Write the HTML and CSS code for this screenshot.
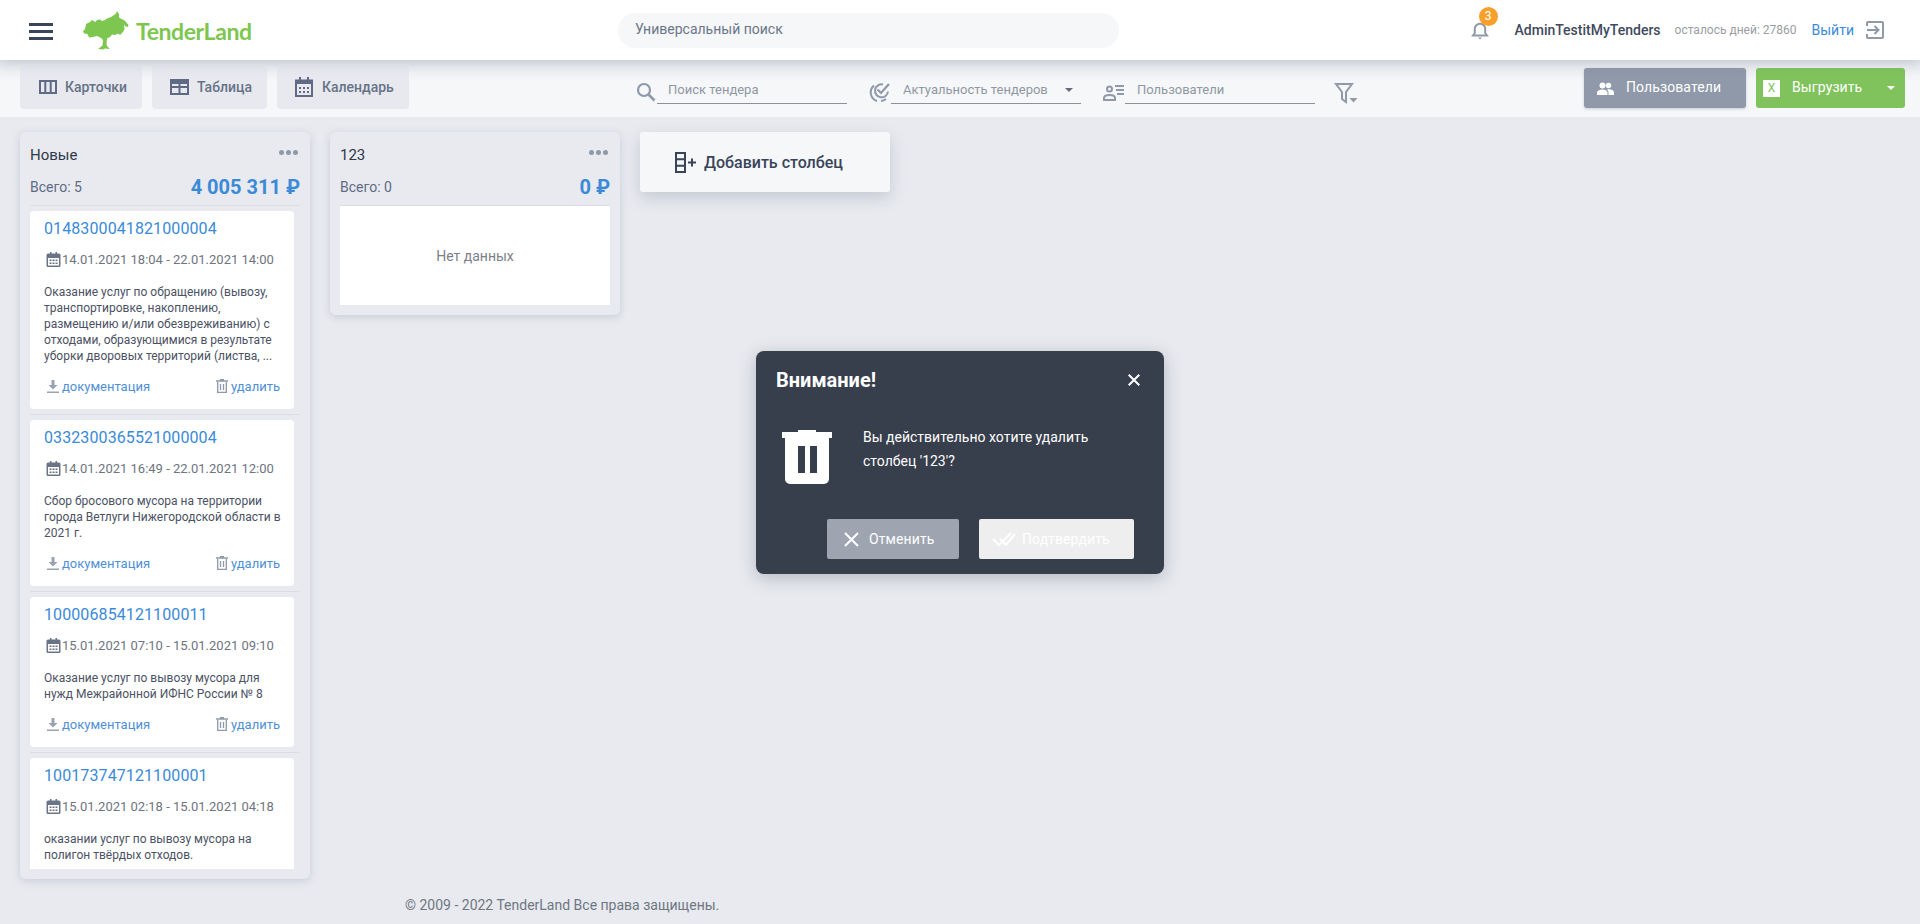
FILE: index.html
```html
<!DOCTYPE html>
<html lang="ru">
<head>
<meta charset="utf-8">
<title>TenderLand</title>
<link rel="stylesheet" href="styles.css">
</head>
<body>
<header class="header">
  <div class="burger"><span></span><span></span><span></span></div>
  <a class="logo">
    <svg class="logo-mark" width="46" height="39" viewBox="0 0 46 39"><path fill="#7dc750" d="M0 20L2 18L3 13L7 11L9 9L12.500 11L14 9L17 8.500L19 10L22 9L24 7.500L28 6L31 4L33 2.500L34 0L36 3L36 6.500L38.500 8L41 9L43 11L45.500 14L45 16L42.500 15.500L41 13.500L41.500 18L40 21L37 24L35 22.500L32 24L29 23.500L27 26L24 27.500L23.500 33L24 35L27 38L22 37.500L20 38.500L15 38L19.500 34.500L20 29L18 27L14 25L10 26L6 26.500L4.500 23L1 22.500Z"/></svg>
    <span class="logo-text">TenderLand</span>
  </a>
  <div class="global-search">Универсальный поиск</div>
  <div class="user">
    <div class="bell">
      <svg width="20" height="20" viewBox="0 0 20 20"><path fill="none" stroke="#8f99a9" stroke-width="2" d="M3 15.500h14l-1.800-2.500V9a5.200 5.200 0 0 0-10.400 0v4z"/><path fill="#8f99a9" d="M8 17.500h4L10 19.500z"/></svg>
      <span class="badge">3</span>
    </div>
    <span class="user-name">AdminTestitMyTenders</span>
    <span class="days">осталось дней: 27860</span>
    <a class="logout">Выйти</a>
    <svg width="18" height="18" viewBox="0 0 18 18"><path fill="none" stroke="#8f99a9" stroke-width="2" d="M1 5V2a1 1 0 0 1 1-1h14a1 1 0 0 1 1 1v14a1 1 0 0 1-1 1H2a1 1 0 0 1-1-1v-3M1 9h11M8.500 5l4 4-4 4"/></svg>
  </div>
</header>

<div class="toolbar">
  <div class="views">
    <a class="view view-cards">
      <svg width="18" height="14" viewBox="0 0 18 14"><path fill="none" stroke="#5f6b84" stroke-width="2" d="M1 1h16v12H1zM6.300 1v12M11.700 1v12"/></svg>
      Карточки
    </a>
    <a class="view view-table">
      <svg width="19" height="16" viewBox="0 0 19 16"><path fill="none" stroke="#5f6b84" stroke-width="2" d="M1 1h17v14H1zM1 8h17M9.500 5v10"/><path fill="#5f6b84" d="M1 1h17v4H1z"/></svg>
      Таблица
    </a>
    <a class="view view-cal">
      <svg width="18" height="20" viewBox="0 0 18 20"><path fill="none" stroke="#5f6b84" stroke-width="2" d="M1 3.500h16v15.500H1zM5 0v5M13 0v5"/><path fill="#5f6b84" d="M1 3.500h16v3.500H1zM4 10h2v2H4zM8 10h2v2H8zM12 10h2v2h-2zM4 14h2v2H4zM8 14h2v2H8zM12 14h2v2h-2z"/></svg>
      Календарь
    </a>
  </div>
  <div class="filters">
    <div class="filter">
      <svg width="21" height="20" viewBox="0 0 21 20"><circle cx="8" cy="8" r="6" fill="none" stroke="#8f99a9" stroke-width="2.200"/><path stroke="#8f99a9" stroke-width="2.600" d="M12.500 12.500l6 6"/></svg>
      <div class="field">Поиск тендера</div>
    </div>
    <div class="filter">
      <svg width="22" height="20" viewBox="0 0 22 20"><path fill="none" stroke="#8f99a9" stroke-width="2" d="M5 3.500a9 9 0 0 0 3 15.500M17 17a9 9 0 0 1-5 2"/><path fill="none" stroke="#8f99a9" stroke-width="2" d="M14 2.500a6.500 6.500 0 1 0 5 7"/><path fill="none" stroke="#8f99a9" stroke-width="2.200" d="M8.500 7.500l3.500 3.500L20 2"/></svg>
      <div class="field field-gap">Актуальность тендеров<span class="caret"></span></div>
    </div>
    <div class="filter">
      <svg width="22" height="20" viewBox="0 0 22 20"><circle cx="6.500" cy="7" r="2.500" fill="none" stroke="#8f99a9" stroke-width="2"/><path fill="none" stroke="#8f99a9" stroke-width="2" d="M1 18v-2c0-2 2.500-3 5.500-3s5.500 1 5.500 3v2z"/><path stroke="#8f99a9" stroke-width="2" d="M12 4h9M13 8h8M14 12h7"/></svg>
      <div class="field field-gap">Пользователи</div>
    </div>
    <svg class="funnel" width="25" height="24" viewBox="0 0 25 24"><path fill="none" stroke="#8f99a9" stroke-width="2" d="M2 2h16l-6 8v10l-4-3v-7z"/><path fill="#8f99a9" d="M15.500 16h8l-4 4.500z"/></svg>
  </div>
  <div class="actions">
    <a class="btn btn-users">
      <svg width="17" height="13" viewBox="0 0 17 13"><circle cx="5.500" cy="3.500" r="3" fill="#fff"/><circle cx="11.500" cy="3.500" r="2.700" fill="#fff"/><path fill="#fff" d="M0 13v-2.500C0 8.500 3 7.500 5.500 7.500s5 1 5 3V13zM11.500 13v-2.500c0-1.200-.6-2.200-1.500-3 3-.6 7 .4 7 3V13z"/></svg>
      Пользователи
    </a>
    <a class="btn btn-export">
      <span class="xls">X</span>
      Выгрузить
      <span class="caret caret-white"></span>
    </a>
  </div>
</div>

<main class="board">
  <section class="col">
    <div class="col-title"><span>Новые</span><span class="dots"><i></i><i></i><i></i></span></div>
    <div class="col-sum"><span class="total">Всего: 5</span><span class="sum">4 005 311 ₽</span></div>
    <div class="cards">
      <article class="item">
        <div class="card">
          <a class="num">0148300041821000004</a>
          <div class="date"><svg class="cal" width="15" height="15" viewBox="0 0 15 15"><path fill="#6a7487" d="M2 1.500h2V0h1.500v1.500h4V0H11v1.500h2a1.500 1.500 0 0 1 1.500 1.500v10.500A1.500 1.500 0 0 1 13 15H2a1.500 1.500 0 0 1-1.500-1.500V3A1.500 1.500 0 0 1 2 1.500zM2 6v7.500h11V6zM3.500 7.500h2v1.500h-2zM6.500 7.500h2v1.500h-2zM9.500 7.500h2v1.500h-2zM3.500 10.500h2V12h-2zM6.500 10.500h2V12h-2zM9.500 10.500h2V12h-2z"/></svg>14.01.2021 18:04 - 22.01.2021 14:00</div>
          <p class="desc">Оказание услуг по обращению (вывозу, транспортировке, накоплению, размещению и/или обезвреживанию) с отходами, образующимися в результате уборки дворовых территорий (листва, ...</p>
          <div class="links">
            <a class="link"><svg width="12" height="13" viewBox="0 0 12 13"><path fill="#9aa3b1" d="M4.500 0h3v5h3L6 9.500 1.500 5h3zM0 11.500h12V13H0z"/></svg>документация</a>
            <a class="link"><svg width="12" height="14" viewBox="0 0 12 14"><path fill="none" stroke="#8f99a9" stroke-width="1.300" d="M1.700 3v10.300h8.600V3M0 2h12M4 .7h4M4.500 5v6M7.500 5v6"/></svg>удалить</a>
          </div>
        </div>
      </article>
      <article class="item">
        <div class="card">
          <a class="num">0332300365521000004</a>
          <div class="date"><svg class="cal" width="15" height="15" viewBox="0 0 15 15"><path fill="#6a7487" d="M2 1.500h2V0h1.500v1.500h4V0H11v1.500h2a1.500 1.500 0 0 1 1.500 1.500v10.500A1.500 1.500 0 0 1 13 15H2a1.500 1.500 0 0 1-1.500-1.500V3A1.500 1.500 0 0 1 2 1.500zM2 6v7.500h11V6zM3.500 7.500h2v1.500h-2zM6.500 7.500h2v1.500h-2zM9.500 7.500h2v1.500h-2zM3.500 10.500h2V12h-2zM6.500 10.500h2V12h-2zM9.500 10.500h2V12h-2z"/></svg>14.01.2021 16:49 - 22.01.2021 12:00</div>
          <p class="desc">Сбор бросового мусора на территории города Ветлуги Нижегородской области в 2021 г.</p>
          <div class="links">
            <a class="link"><svg width="12" height="13" viewBox="0 0 12 13"><path fill="#9aa3b1" d="M4.500 0h3v5h3L6 9.500 1.500 5h3zM0 11.500h12V13H0z"/></svg>документация</a>
            <a class="link"><svg width="12" height="14" viewBox="0 0 12 14"><path fill="none" stroke="#8f99a9" stroke-width="1.300" d="M1.700 3v10.300h8.600V3M0 2h12M4 .7h4M4.500 5v6M7.500 5v6"/></svg>удалить</a>
          </div>
        </div>
      </article>
      <article class="item">
        <div class="card">
          <a class="num">100006854121100011</a>
          <div class="date"><svg class="cal" width="15" height="15" viewBox="0 0 15 15"><path fill="#6a7487" d="M2 1.500h2V0h1.500v1.500h4V0H11v1.500h2a1.500 1.500 0 0 1 1.500 1.500v10.500A1.500 1.500 0 0 1 13 15H2a1.500 1.500 0 0 1-1.500-1.500V3A1.500 1.500 0 0 1 2 1.500zM2 6v7.500h11V6zM3.500 7.500h2v1.500h-2zM6.500 7.500h2v1.500h-2zM9.500 7.500h2v1.500h-2zM3.500 10.500h2V12h-2zM6.500 10.500h2V12h-2zM9.500 10.500h2V12h-2z"/></svg>15.01.2021 07:10 - 15.01.2021 09:10</div>
          <p class="desc">Оказание услуг по вывозу мусора для нужд Межрайонной ИФНС России № 8</p>
          <div class="links">
            <a class="link"><svg width="12" height="13" viewBox="0 0 12 13"><path fill="#9aa3b1" d="M4.500 0h3v5h3L6 9.500 1.500 5h3zM0 11.500h12V13H0z"/></svg>документация</a>
            <a class="link"><svg width="12" height="14" viewBox="0 0 12 14"><path fill="none" stroke="#8f99a9" stroke-width="1.300" d="M1.700 3v10.300h8.600V3M0 2h12M4 .7h4M4.500 5v6M7.500 5v6"/></svg>удалить</a>
          </div>
        </div>
      </article>
      <article class="item">
        <div class="card">
          <a class="num">100173747121100001</a>
          <div class="date"><svg class="cal" width="15" height="15" viewBox="0 0 15 15"><path fill="#6a7487" d="M2 1.500h2V0h1.500v1.500h4V0H11v1.500h2a1.500 1.500 0 0 1 1.500 1.500v10.500A1.500 1.500 0 0 1 13 15H2a1.500 1.500 0 0 1-1.500-1.500V3A1.500 1.500 0 0 1 2 1.500zM2 6v7.500h11V6zM3.500 7.500h2v1.500h-2zM6.500 7.500h2v1.500h-2zM9.500 7.500h2v1.500h-2zM3.500 10.500h2V12h-2zM6.500 10.500h2V12h-2zM9.500 10.500h2V12h-2z"/></svg>15.01.2021 02:18 - 15.01.2021 04:18</div>
          <p class="desc">оказании услуг по вывозу мусора на полигон твёрдых отходов.</p>
        </div>
      </article>
    </div>
  </section>

  <section class="col col-short">
    <div class="col-title"><span>123</span><span class="dots"><i></i><i></i><i></i></span></div>
    <div class="col-sum"><span class="total">Всего: 0</span><span class="sum">0 ₽</span></div>
    <div class="empty">Нет данных</div>
  </section>

  <a class="add-col">
    <svg width="23" height="21" viewBox="0 0 23 21"><path fill="none" stroke="#39445a" stroke-width="2" d="M1 1h9v19H1zM1 7.300h9M1 13.700h9"/><path stroke="#39445a" stroke-width="2" d="M13 10.500h8M17 6.500v8"/></svg>
    Добавить столбец
  </a>
</main>

<footer class="footer">© 2009 - 2022 TenderLand Все права защищены.</footer>

<div class="modal">
  <div class="modal-head">
    <span class="modal-title">Внимание!</span>
    <svg width="12" height="12" viewBox="0 0 12 12"><path stroke="#fff" stroke-width="2" d="M.7.700l10.600 10.600M11.300.700L.7 11.300"/></svg>
  </div>
  <div class="modal-body">
    <svg class="modal-trash" width="50" height="54" viewBox="0 0 50 54"><path fill="#fff" fill-rule="evenodd" d="M16 0h18v2h16v6H0V2h16zM3 8h44v41a5 5 0 0 1-5 5H8a5 5 0 0 1-5-5zM16 16v27h7V16zM28 16v27h7V16z"/></svg>
    <p class="modal-text">Вы действительно хотите удалить столбец '123'?</p>
  </div>
  <div class="modal-foot">
    <a class="mbtn mbtn-cancel"><svg width="15" height="15" viewBox="0 0 15 15"><path stroke="#fff" stroke-width="2" d="M1 1l13 13M14 1L1 14"/></svg>Отменить</a>
    <a class="mbtn mbtn-ok"><svg width="24" height="14" viewBox="0 0 24 14"><path fill="none" stroke="#fff" stroke-width="2" d="M1 7l6 6L19 1M8 7l6 6L23 2"/></svg>Подтвердить</a>
  </div>
</div>
</body>
</html>
```
FILE: styles.css
```css
* { box-sizing: border-box; }
html, body { margin: 0; height: 924px; overflow: hidden; }
body { background: #e8eaef; font-family: Roboto, "Liberation Sans", sans-serif; color: #39445a; font-size: 14px; position: relative; }
a { text-decoration: none; color: inherit; }
p { margin: 0; }

.header { height: 60px; background: #fff; display: flex; align-items: center; padding: 0 36px 0 29px; box-shadow: 0 2px 12px rgba(90,100,125,.28); position: relative; z-index: 2; }
.burger { width: 24px; display: flex; flex-direction: column; gap: 4px; margin-top: 2px; }
.burger span { display: block; height: 3px; background: #3b4559; }
.logo { display: flex; align-items: center; margin-left: 30px; gap: 7px; width: 168px; }
.logo-mark { flex: none; }
.logo-text { font-family: Lato, sans-serif; font-weight: 700; font-size: 23px; letter-spacing: -.4px; color: #7dc750; margin-top: 1px; }
.global-search { width: 501px; height: 35px; margin-left: 367px; border-radius: 18px; background: #f5f7f9; padding: 0 17px; line-height: 33px; color: #6b7688; font-size: 14px; }
.user { margin-left: auto; display: flex; align-items: center; }
.bell { position: relative; width: 20px; height: 20px; margin-right: 25px; }
.bell svg { display: block; }
.badge { position: absolute; left: 9px; top: -13px; width: 19px; height: 19px; border-radius: 50%; background: #f9a02c; color: #fff; font-size: 12px; line-height: 19px; text-align: center; }
.user-name { font-weight: 500; font-size: 14px; color: #3f4a5e; letter-spacing: 0; }
.days { font-size: 12px; color: #9a9da3; margin-left: 14px; }
.logout { color: #3a8ad8; font-size: 14px; margin: 0 12px 0 15px; }

.toolbar { height: 57px; background: linear-gradient(#e6e8ed, #f5f7f9 22px); display: flex; align-items: flex-start; padding: 6px 15px 0 20px; }
.views { display: flex; gap: 10px; }
.view { height: 43px; display: flex; align-items: center; background: #e7e9ef; border-radius: 4px; color: #667387; font-size: 14px; font-weight: 500; gap: 8px; padding-bottom: 1px; }
.view-cards { width: 122px; padding-left: 19px; gap: 8px; }
.view-table { width: 115px; padding-left: 18px; }
.view-cal { width: 132px; padding-left: 18px; gap: 9px; }
.filters { display: flex; margin-left: 227px; gap: 22px; align-items: flex-start; padding-top: 15px; }
.filter { display: flex; align-items: center; }
.filter svg { flex: none; margin-top: -2px; }
.field { width: 190px; height: 23px; border-bottom: 1px solid #8e9197; color: #9097a3; font-size: 13px; line-height: 18px; padding-left: 11px; position: relative; }
.field-gap { padding-left: 12px; }
.caret { position: absolute; right: 8px; top: 7px; border: 4px solid transparent; border-top-color: #666e7b; border-bottom: 0; }
.funnel { margin-left: -3px; margin-top: 1px; }
.actions { margin-left: auto; display: flex; gap: 10px; padding-top: 2px; }
.btn { height: 40px; border-radius: 3px; color: #fff; font-size: 14px; font-weight: 400; letter-spacing: .1px; display: flex; align-items: center; position: relative; box-shadow: 0 1px 3px rgba(60,70,90,.25); padding-bottom: 2px; }
.btn svg { margin-top: 2px; }
.btn-users { width: 162px; background: #8f99a9; padding-left: 13px; gap: 12px; }
.btn-export { width: 149px; background: #80c35c; padding-left: 7px; gap: 12px; box-shadow: none; }
.xls { width: 17px; height: 17px; background: #fff; color: #80c35c; font-size: 12px; font-weight: 400; line-height: 17px; text-align: center; margin-top: 2px; }
.caret-white { right: 10px; top: 18px; border-top-color: #fff; }

.board { height: 762px; padding: 15px 20px 0; display: flex; align-items: flex-start; gap: 20px; }
.col { width: 290px; height: 747px; background: #e8eaef; border-radius: 6px; padding: 13px 10px 10px; box-shadow: 0 2px 8px rgba(110,120,145,.25); }
.col-short { height: 183px; }
.col-title { display: flex; justify-content: space-between; height: 20px; line-height: 20px; font-size: 15px; font-weight: 400; color: #2f384a; }
.dots { display: flex; gap: 2px; margin-top: 5px; padding-right: 2px; }
.dots i { width: 5px; height: 5px; border-radius: 50%; background: #8f99a9; }
.col-sum { display: flex; justify-content: space-between; align-items: center; height: 33px; margin-top: 8px; padding-bottom: 4px; border-bottom: 1px solid #dcdee4; }
.total { color: #5f6b84; font-size: 14px; }
.sum { color: #3a8ad8; font-size: 20px; font-weight: 700; line-height: 28px; }
.cards { height: 658px; margin-top: 5px; overflow: hidden; }
.item { width: 270px; padding-bottom: 5px; margin-bottom: 5px; border-bottom: 1px solid #dcdee4; }
.card { width: 264px; background: #fff; border-radius: 4px; padding: 6px 12px 13px 14px; }
.num { display: block; color: #3a8ad8; font-size: 16px; font-weight: 400; letter-spacing: .1px; line-height: 24px; }
.date { display: flex; align-items: center; gap: 1px; margin: 8px 0 0 2px; height: 20px; color: #6e7480; font-size: 13px; white-space: nowrap; }
.cal { flex: none; }
.desc { margin-top: 15px; font-size: 12px; line-height: 16px; color: #4b5263; }
.links { display: flex; justify-content: space-between; margin: 12px 2px 0 3px; height: 20px; align-items: center; }
.link { display: flex; align-items: center; gap: 3px; color: #4f8fd6; font-size: 13px; white-space: nowrap; }
.empty { height: 99px; background: #fff; display: flex; align-items: center; justify-content: center; color: #7d8088; font-size: 14px; }
.add-col { width: 250px; height: 60px; background: #f5f7f9; border-radius: 3px; display: flex; align-items: center; padding-left: 35px; gap: 6px; font-size: 16px; font-weight: 500; color: #39445a; box-shadow: 0 6px 16px rgba(110,120,145,.28); }

.footer { padding-left: 405px; margin-top: 16px; line-height: 20px; color: #6f7782; font-size: 14px; }

.modal { position: absolute; left: 756px; top: 351px; width: 408px; height: 223px; background: #373e4c; border-radius: 8px; box-shadow: 0 4px 18px rgba(60,70,90,.3); color: #fff; padding: 16px 24px 15px 20px; display: flex; flex-direction: column; }
.modal-head { display: flex; justify-content: space-between; align-items: center; height: 26px; }
.modal-title { font-size: 20px; font-weight: 700; }
.modal-body { display: flex; margin-top: 37px; margin-left: 6px; align-items: flex-start; flex: 1; }
.modal-trash { flex: none; }
.modal-text { margin: -5px 0 0 31px; width: 250px; font-size: 14px; line-height: 24px; }
.modal-foot { display: flex; justify-content: flex-end; gap: 20px; margin-right: 6px; }
.mbtn { height: 40px; border-radius: 2px; display: flex; align-items: center; color: #fff; font-size: 14px; font-weight: 400; letter-spacing: .1px; }
.mbtn-cancel { width: 132px; background: #9ea5b1; padding-left: 17px; gap: 10px; }
.mbtn-ok { width: 155px; background: #eee; padding-left: 13px; gap: 6px; }
```
